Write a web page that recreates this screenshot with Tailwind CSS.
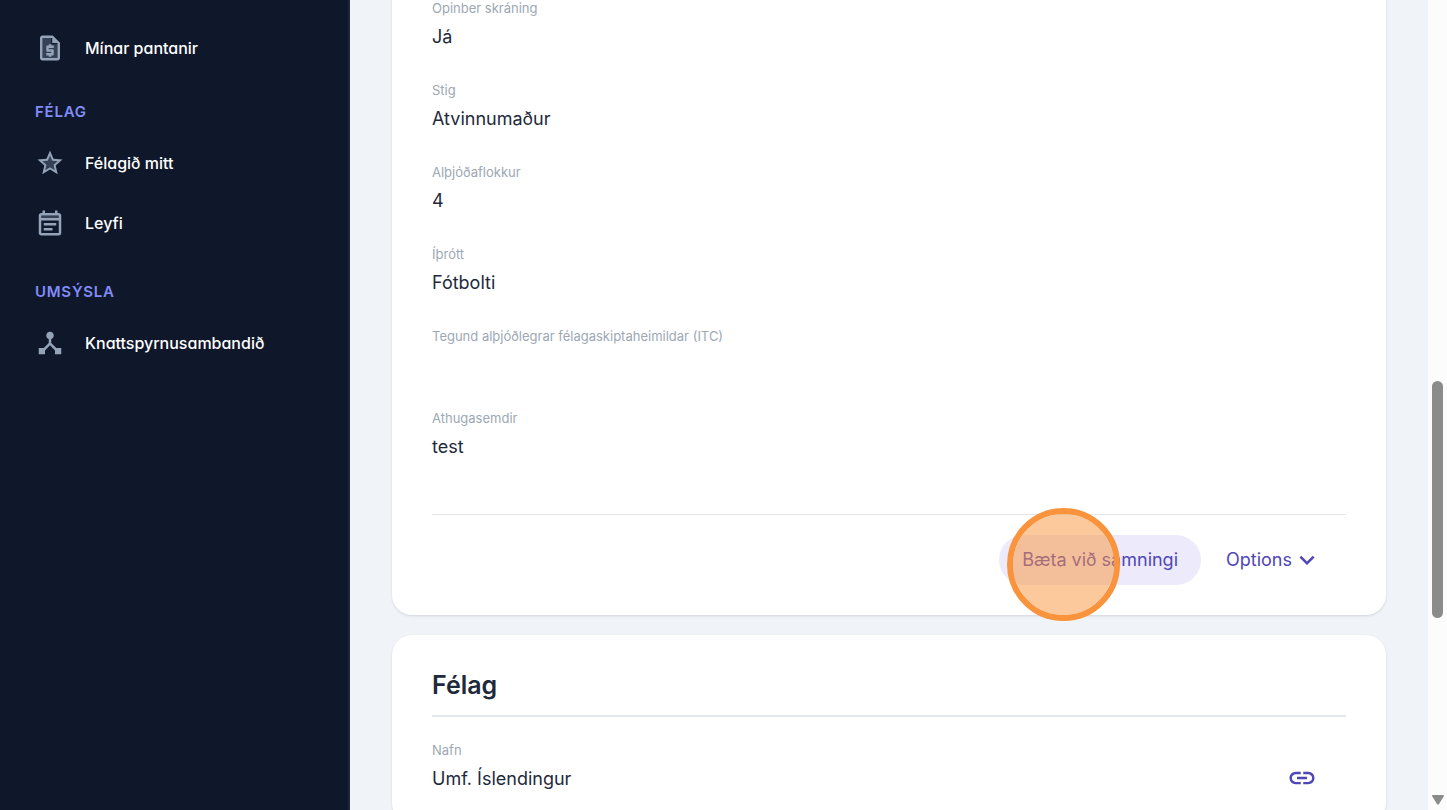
<!DOCTYPE html>
<html lang="is">
<head>
    <meta charset="UTF-8">
    <meta name="viewport" content="width=device-width, initial-scale=1.0">
    <title>Félag</title>
    <script src="https://cdn.jsdelivr.net/npm/@tailwindcss/browser@4"></script>
</head>
<body class="flex h-screen overflow-hidden bg-[#f0f4f9] font-['Inter',sans-serif] text-[#1e293b]">

    <!-- Sidebar -->
    <aside class="w-[350px] shrink-0 border-r-2 border-[#1e2536] bg-[#0f172a] pt-[18px] text-white">
        <nav class="text-base font-medium [font-feature-settings:'cv11']">
            <a href="#" class="flex h-[60px] items-center gap-5 px-[35px]">
                <svg class="size-[30px] shrink-0 fill-[#94a3b8]" viewBox="0 0 24 24">
                    <path opacity=".3" d="M13 4H6v16h12V9h-5z"/>
                    <path d="M14 2H6c-1.100 0-2 .9-2 2v16c0 1.100.9 2 2 2h12c1.100 0 2-.9 2-2V8l-6-6zm4 18H6V4h8v4h4v12z"/>
                    <path d="M14 2v6h6z"/>
                    <path d="M11 19h2v-1h1c.55 0 1-.45 1-1v-3c0-.55-.45-1-1-1h-3v-1h4v-2h-2V9h-2v1h-1c-.55 0-1 .45-1 1v3c0 .55.45 1 1 1h3v1H9v2h2v1z"/>
                </svg>
                <span>Mínar pantanir</span>
            </a>

            <h2 class="mt-6 mb-[11px] px-[35px] text-[15px] leading-5 font-semibold tracking-wider text-[#818cf8]">FÉLAG</h2>
            <a href="#" class="flex h-[60px] items-center gap-5 px-[35px]">
                <svg class="size-[30px] shrink-0 fill-[#94a3b8]" viewBox="0 0 24 24">
                    <path opacity=".3" d="M12 15.400l-3.760 2.270 1-4.280-3.320-2.880 4.380-.38L12 6.100l1.710 4.040 4.380.38-3.320 2.880 1 4.280z"/>
                    <path d="M22 9.240l-7.190-.62L12 2 9.190 8.630 2 9.240l5.460 4.730L5.820 21 12 17.270 18.180 21l-1.630-7.030L22 9.240zM12 15.400l-3.760 2.270 1-4.280-3.320-2.880 4.380-.38L12 6.100l1.710 4.040 4.380.38-3.320 2.880 1 4.280L12 15.400z"/>
                </svg>
                <span>Félagið mitt</span>
            </a>
            <a href="#" class="flex h-[60px] items-center gap-5 px-[35px]">
                <svg class="size-[30px] shrink-0 fill-[#94a3b8]" viewBox="0 0 24 24">
                    <path opacity=".3" d="M5 6h14v2H5z"/>
                    <path d="M19 4h-1V2h-2v2H8V2H6v2H5c-1.100 0-2 .9-2 2v14c0 1.100.9 2 2 2h14c1.100 0 2-.9 2-2V6c0-1.100-.9-2-2-2zm0 16H5V10h14v10zm0-12H5V6h14v2zM7 12h10v2H7zm0 4h7v2H7z"/>
                </svg>
                <span>Leyfi</span>
            </a>

            <h2 class="mt-[29px] mb-[11px] px-[35px] text-[15px] leading-5 font-semibold tracking-wider text-[#818cf8]">UMSÝSLA</h2>
            <a href="#" class="flex h-[60px] items-center gap-5 px-[35px]">
                <svg class="size-[30px] shrink-0 fill-[#94a3b8]" viewBox="0 0 24 24">
                    <path d="M17 16l-4-4V8.820C14.160 8.400 15 7.300 15 6c0-1.660-1.340-3-3-3S9 4.340 9 6c0 1.300.84 2.400 2 2.820V12l-4 4H3v5h5v-3.050l4-4.200 4 4.200V21h5v-5h-4z"/>
                </svg>
                <span>Knattspyrnusambandið</span>
            </a>
        </nav>
    </aside>

    <!-- Content -->
    <main class="flex min-w-0 grow flex-col gap-5 overflow-hidden px-[42px]">
        <section class="-mt-10 shrink-0 rounded-[20px] bg-white px-10 pt-[38px] pb-[30px] shadow">
            <dl class="flex flex-col gap-[29px]">
                <div>
                    <dt class="text-[13px] leading-5 text-[#9ca8b4]">Opinber skráning</dt>
                    <dd class="mt-[5px] h-7 text-lg leading-7">Já</dd>
                </div>
                <div>
                    <dt class="text-[13px] leading-5 text-[#9ca8b4]">Stig</dt>
                    <dd class="mt-[5px] h-7 text-lg leading-7">Atvinnumaður</dd>
                </div>
                <div>
                    <dt class="text-[13px] leading-5 text-[#9ca8b4]">Alþjóðaflokkur</dt>
                    <dd class="mt-[5px] h-7 text-lg leading-7">4</dd>
                </div>
                <div>
                    <dt class="text-[13px] leading-5 text-[#9ca8b4]">Íþrótt</dt>
                    <dd class="mt-[5px] h-7 text-lg leading-7">Fótbolti</dd>
                </div>
                <div>
                    <dt class="text-[13px] leading-5 text-[#9ca8b4]">Tegund alþjóðlegrar félagaskiptaheimildar (ITC)</dt>
                    <dd class="mt-[5px] h-7 text-lg leading-7"></dd>
                </div>
                <div>
                    <dt class="text-[13px] leading-5 text-[#9ca8b4]">Athugasemdir</dt>
                    <dd class="mt-[5px] h-7 text-lg leading-7">test</dd>
                </div>
            </dl>

            <div class="mt-[53px] flex justify-end border-t border-[#e2e6ea] pt-5">
                <div class="relative">
                    <button type="button" class="h-[50px] rounded-full bg-[#edebfb] px-[23px] text-lg text-[#4f46b8]">Bæta við samningi</button>
                    <!-- click marker -->
                    <span class="pointer-events-none absolute -top-[27px] left-2 size-[113px] rounded-full border-6 border-[#f9933c] bg-[#f9933c]/50 bg-clip-padding"></span>
                </div>
                <button type="button" class="flex h-[50px] items-center rounded-full pr-6 pl-[25px] text-lg text-[#4f46b8]">
                    Options
                    <svg class="size-[30px] fill-current" viewBox="0 0 24 24">
                        <path d="M16.590 8.590L12 13.170 7.410 8.590 6 10l6 6 6-6z"/>
                    </svg>
                </button>
            </div>
        </section>

        <section class="shrink-0 rounded-[20px] bg-white px-10 pt-[30px] pb-[30px] shadow">
            <h1 class="border-b-2 border-[#e2e6ea] pb-[10px] text-[25px] leading-10 font-semibold">Félag</h1>
            <div class="mt-[23px] flex items-end justify-between">
                <dl>
                    <dt class="text-[13px] leading-5 text-[#9ca8b4]">Nafn</dt>
                    <dd class="mt-[5px] h-7 text-lg leading-7">Umf. Íslendingur</dd>
                </dl>
                <a href="#" aria-label="Umf. Íslendingur" class="mr-[29px] text-[#4f46b8]">
                    <svg class="size-[30px] fill-current" viewBox="0 0 24 24">
                        <path d="M3.900 12c0-1.710 1.390-3.100 3.100-3.100h4V7H7c-2.760 0-5 2.240-5 5s2.240 5 5 5h4v-1.900H7c-1.710 0-3.100-1.390-3.100-3.100zM8 13h8v-2H8v2zm9-6h-4v1.900h4c1.710 0 3.100 1.390 3.100 3.100s-1.390 3.100-3.100 3.100h-4V17h4c2.760 0 5-2.240 5-5s-2.240-5-5-5z"/>
                    </svg>
                </a>
            </div>
        </section>
    </main>

    <!-- Scrollbar -->
    <div class="flex w-[19px] shrink-0 flex-col items-center justify-end bg-[#fcfcfc] pb-[5px]">
        <div class="mb-[177px] h-[237px] w-[11px] rounded-full bg-[#8b8b8b]"></div>
        <svg class="h-[10px] w-3 fill-[#8b8b8b]" viewBox="0 0 12 10">
            <path d="M1 0h10q1.500 0 .700 1.500L7 9q-1 1.500-2 0L.3 1.500Q-.5 0 1 0z"/>
        </svg>
    </div>

</body>
</html>
